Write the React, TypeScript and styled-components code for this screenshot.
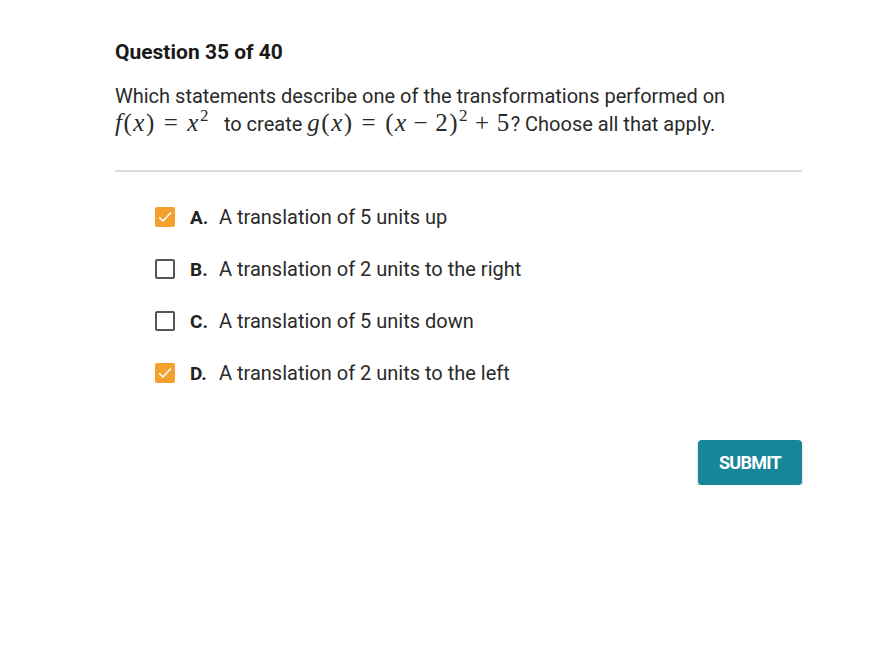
import React, { useState } from "react";
import styled, { createGlobalStyle } from "styled-components";

const Global = createGlobalStyle`
  html, body { margin: 0; padding: 0; background: #fff; }
  body { font-family: Roboto, "Noto Sans", sans-serif; color: #222; }
`;

const Page = styled.main`
  width: 687px;
  margin-left: 115px;
  padding-top: 40px;
  display: flex;
  flex-direction: column;
`;

const Title = styled.h1`
  margin: 0;
  font-size: 21px;
  line-height: 24px;
  font-weight: 700;
  color: #1a1a1a;
`;

const Prompt = styled.p`
  margin: 18px 0 0;
  font-size: 20px;
  line-height: 28px;
  color: #2a2a2a;
`;

const M = styled.span<{ $after?: number }>`
  font-family: "Liberation Serif", "DejaVu Serif", serif;
  font-size: 25px;
  letter-spacing: 1.5px;
  line-height: 0;
  margin-right: ${(p) => p.$after ?? 0}px;
`;

const V = styled.i`
  font-style: italic;
`;

const Sup = styled.sup`
  font-size: 17px;
  line-height: 0;
  vertical-align: 0;
  position: relative;
  top: -10px;
`;

const Op = styled.span<{ $w?: number }>`
  padding: 0 ${(p) => p.$w ?? 8}px;
`;

const Divider = styled.hr`
  margin: 32px 0 0;
  border: 0;
  height: 2px;
  background: #dcdcdc;
`;

const Options = styled.ul`
  list-style: none;
  margin: 34px 0 0;
  padding: 0 0 0 40px;
  display: flex;
  flex-direction: column;
  gap: 30px;
`;

const Option = styled.li`
  display: flex;
  align-items: center;
  height: 22px;
  cursor: pointer;
  font-size: 20px;
  color: #2a2a2a;
`;

const Box = styled.span<{ $on: boolean }>`
  width: 20px;
  height: 20px;
  box-sizing: border-box;
  border-radius: 2px;
  border: ${(p) => (p.$on ? "none" : "2px solid #555")};
  background: ${(p) => (p.$on ? "#f5a130" : "#fff")};
  display: flex;
  align-items: center;
  justify-content: center;
  margin-right: 15px;
  flex: none;
`;

const Letter = styled.span`
  font-weight: 700;
  font-size: 19px;
  width: 29px;
  flex: none;
  color: #222;
`;

const Footer = styled.div`
  display: flex;
  justify-content: flex-end;
  margin-top: 56px;
`;

const Submit = styled.button`
  width: 104px;
  height: 45px;
  border: 0;
  border-radius: 4px;
  background: #18869a;
  color: #fff;
  font-family: Roboto, sans-serif;
  font-weight: 700;
  font-size: 18px;
  letter-spacing: -0.7px;
  box-shadow: 0 2px 3px rgba(0, 0, 0, 0.25);
  cursor: pointer;
`;

const options = [
  { l: "A.", t: "A translation of 5 units up" },
  { l: "B.", t: "A translation of 2 units to the right" },
  { l: "C.", t: "A translation of 5 units down" },
  { l: "D.", t: "A translation of 2 units to the left" },
];

export default function App() {
  const [sel, setSel] = useState<boolean[]>([true, false, false, true]);
  return (
    <>
      <Global />
      <Page>
        <Title>Question 35 of 40</Title>
        <Prompt>
          Which statements describe one of the transformations performed on
          <br />
          <M $after={9}>
            <V>f</V>(<V>x</V>)<Op>=</Op><V>x</V>
            <Sup>2</Sup>
          </M>{" "}
          to create{" "}
          <M>
            <V>g</V>(<V>x</V>)<Op>=</Op>(<V>x</V>
            <Op $w={6}>−</Op>2)<Sup>2</Sup>
            <Op $w={6}>+</Op>5
          </M>
          ? Choose all that apply.
        </Prompt>
        <Divider />
        <Options>
          {options.map((o, i) => (
            <Option
              key={o.l}
              onClick={() => setSel((s) => s.map((v, j) => (j === i ? !v : v)))}
            >
              <Box $on={sel[i]}>
                {sel[i] && (
                  <svg width="14" height="12" viewBox="0 0 14 12">
                    <path d="M1.5 6.5 L5 10 L12.5 2" fill="none" stroke="#fff" strokeWidth="1.5" strokeLinecap="round" strokeLinejoin="round" />
                  </svg>
                )}
              </Box>
              <Letter>{o.l}</Letter>
              <span>{o.t}</span>
            </Option>
          ))}
        </Options>
        <Footer>
          <Submit>SUBMIT</Submit>
        </Footer>
      </Page>
    </>
  );
}
